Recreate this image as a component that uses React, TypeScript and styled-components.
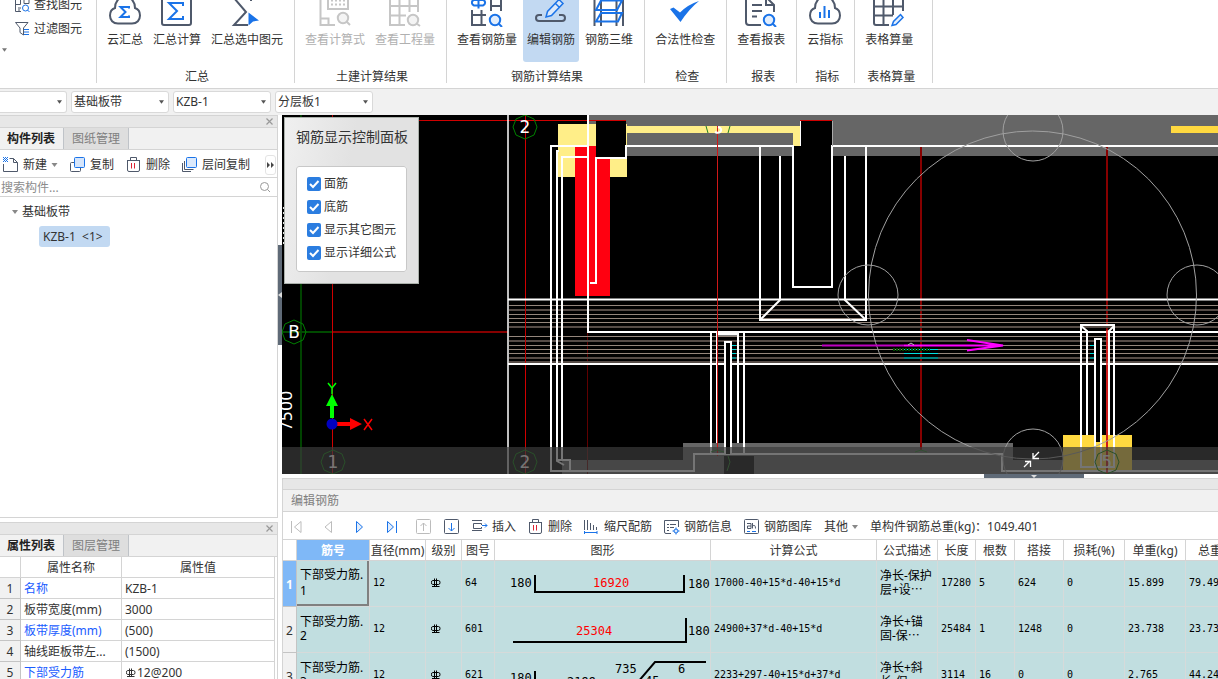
import React from "react";
import styled, { createGlobalStyle, css } from "styled-components";

const c = {
  text: "#333333",
  muted: "#808080",
  faint: "#b0b0b0",
  line: "#d4d4d4",
  chrome: "#f1f1f1",
  strip: "#e7e7e7",
  ink: "#4f596b",
  blue: "#1a73e8",
  link: "#1a5cff",
  select: "#c2d9f2",
  head: "#7fb8f7",
  row: "#c1dee0",
  rail: "#5f6a77",
};

const sans = `"Noto Sans", "Noto Sans CJK SC", sans-serif`;
const mono = `"DejaVu Sans Mono", "Noto Sans CJK SC", monospace`;

const GlobalStyle = createGlobalStyle`
  * { box-sizing: border-box; }
  body { margin: 0; background: #fff; color: ${c.text}; font: 12px/18px ${sans}; overflow: hidden; }
  button, input, select { font: inherit; color: inherit; margin: 0; }
  button { border: 0; padding: 0; background: none; white-space: nowrap; }
  svg { display: block; flex: none; }
`;

const Shell = styled.div`
  display: flex;
  flex-direction: column;
  height: 100vh;
`;

/* ---------- ribbon ---------- */

const Ribbon = styled.header`
  display: flex;
  flex: none;
  align-items: flex-end;
  height: 89px;
  padding-bottom: 5px;
  border-bottom: 1px solid ${c.line};
  overflow: hidden;
`;

const Group = styled.section`
  display: flex;
  flex: none;
  flex-direction: column;
  gap: 7px;
  min-width: 58px;
  height: 92px;
  padding: 0 7px 0 6px;
  border-right: 1px solid ${c.line};
  &:last-child { padding-right: 15px; }
`;

const GroupTools = styled.div`
  display: flex;
  gap: 2px;
`;

const GroupLabel = styled.div`
  padding-left: 4px;
  line-height: 16px;
  text-align: center;
  white-space: nowrap;
`;

const BigButton = styled.button<{ $active?: boolean }>`
  display: flex;
  flex-direction: column;
  align-items: center;
  gap: 4px;
  padding: 4px 4px 13px;
  border-radius: 3px;
  background: ${(p) => (p.$active ? c.select : "transparent")};
  &:disabled { color: ${c.faint}; }
`;

const MiniGroup = styled.section`
  display: flex;
  flex: none;
  flex-direction: column;
  width: 97px;
  height: 92px;
  padding-top: 2px;
  border-right: 1px solid ${c.line};
`;

const MiniButton = styled.button`
  display: flex;
  align-items: center;
  gap: 4px;
  height: 24px;
  padding-left: 14px;
`;

const MoreButton = styled.button`
  display: flex;
  align-items: center;
  height: 18px;
  padding-left: 2px;
`;

/* ---------- selector bar ---------- */

const SelectorBar = styled.div`
  display: flex;
  flex: none;
  gap: 4px;
  height: 26px;
  padding: 2px 0;
  background: ${c.chrome};
`;

const Picker = styled.label<{ $clipped?: boolean }>`
  display: grid;
  align-items: center;
  width: ${(p) => (p.$clipped ? 67 : 98)}px;
  border: 1px solid #d9d9d9;
  border-left-width: ${(p) => (p.$clipped ? 0 : 1)}px;
  border-radius: ${(p) => (p.$clipped ? "0 3px 3px 0" : "3px")};
  background: #fff;
  > * { grid-area: 1 / 1; }
  > svg { justify-self: end; margin-right: 4px; pointer-events: none; }
`;

const PickerSelect = styled.select`
  width: 100%;
  height: 20px;
  padding: 0 16px 0 2px;
  border: 0;
  background: transparent;
  appearance: none;
`;

/* ---------- work area ---------- */

const Work = styled.main`
  display: grid;
  flex: 1;
  grid-template-columns: 278px 4px minmax(0, 1fr);
  min-height: 0;
`;

const LeftDock = styled.aside`
  display: grid;
  grid-template-rows: minmax(0, 403fr) minmax(0, 157fr);
  gap: 4px;
  min-height: 0;
`;

const Panel = styled.section`
  display: flex;
  flex-direction: column;
  min-height: 0;
  border: 1px solid ${c.line};
  border-left: 0;
  background: #fff;
  overflow: hidden;
`;

const LowerPanel = styled(Panel)`
  border-bottom: 0;
`;

const PanelStrip = styled.div`
  display: flex;
  flex: none;
  align-items: center;
  justify-content: flex-end;
  height: 11px;
  padding-right: 3px;
  background: ${c.strip};
`;

const Tabs = styled.div`
  display: flex;
  flex: none;
  height: 23px;
  background: ${c.chrome};
  border-top: 1px solid ${c.line};
  border-bottom: 1px solid ${c.line};
`;

const Tab = styled.button<{ $on?: boolean }>`
  width: ${(p) => (p.$on ? 64 : 65)}px;
  padding-right: ${(p) => (p.$on ? 1 : 0)}px;
  border-right: 1px solid #bfc3c8;
  background: ${(p) => (p.$on ? c.chrome : "#dedede")};
  color: ${(p) => (p.$on ? "#222" : c.muted)};
  font-weight: ${(p) => (p.$on ? 700 : 400)};
`;

const PanelTools = styled.div`
  display: flex;
  flex: none;
  align-items: center;
  gap: 12px;
  height: 28px;
  padding: 2px 0 0 3px;
  border-bottom: 1px solid ${c.line};
`;

const ToolButton = styled.button`
  display: flex;
  align-items: center;
  gap: 4px;
`;

const Overflow = styled.button`
  display: grid;
  place-items: center;
  width: 11px;
  height: 20px;
  margin: 0 1px 0 auto;
  border: 1px solid #e4e4e4;
  border-radius: 3px;
`;

const Search = styled.label`
  display: flex;
  flex: none;
  align-items: center;
  height: 19px;
  padding-right: 6px;
  border-bottom: 1px solid ${c.line};
`;

const SearchInput = styled.input`
  flex: 1;
  min-width: 0;
  height: 18px;
  padding: 2px 1px 0;
  border: 0;
  outline: 0;
  &::placeholder { color: #8c8c8c; opacity: 1; }
`;

const Tree = styled.ul`
  margin: 0;
  padding: 3px 0 0 11px;
  list-style: none;
  ul { margin: 0; padding: 0 0 0 28px; list-style: none; }
`;

const TreeRow = styled.div`
  display: flex;
  align-items: center;
  gap: 3px;
  height: 24px;
`;

const TreeLeaf = styled.span`
  padding: 0 7px 0 4px;
  border-radius: 3px;
  background: ${c.select};
  line-height: 21px;
  white-space: pre;
`;

const PropTable = styled.table`
  width: 275px;
  border-spacing: 0;
  table-layout: fixed;
  th, td {
    height: 21px;
    padding: 2px 3px 0;
    border-right: 1px solid ${c.line};
    border-bottom: 1px solid ${c.line};
    font-weight: 400;
    text-align: left;
    white-space: nowrap;
    overflow: hidden;
  }
  thead th { text-align: center; }
  tbody th { padding: 2px 0 0; background: ${c.chrome}; text-align: center; border-color: #c4c4c4; }
  col:nth-child(1) { width: 21px; }
  col:nth-child(2) { width: 101px; }
`;

const PropName = styled.td<{ $link?: boolean }>`
  color: ${(p) => (p.$link ? c.link : c.text)};
`;

const BarValue = styled.span`
  display: flex;
  align-items: center;
  gap: 1px;
`;

const Splitter = styled.div`
  display: flex;
  align-items: flex-start;
  background: #fff;
  padding-top: 130px;
`;

const SplitterGrip = styled.button`
  display: grid;
  place-items: center;
  width: 4px;
  height: 100px;
  background: ${c.rail};
`;

const RightDock = styled.div`
  display: grid;
  grid-template-rows: minmax(0, 359fr) 4px minmax(0, 201fr);
  min-height: 0;
  min-width: 0;
`;

const Viewport = styled.div`
  position: relative;
  background: #000;
  overflow: hidden;
  > svg { width: 100%; height: 100%; }
`;

const FloatPanel = styled.form`
  position: absolute;
  top: 2px;
  left: 2px;
  width: 135px;
  padding: 9px 11px 11px;
  border: 1px solid #aab0aa;
  background: linear-gradient(100deg, #f0f0f0, #e2e2e2 45%);
  box-shadow: 0 0 8px rgba(0, 0, 0, 0.25);
`;

const FloatTitle = styled.h2`
  margin: 0 0 19px;
  font-size: 14px;
  line-height: 20px;
  font-weight: 400;
  white-space: nowrap;
`;

const FloatBox = styled.fieldset`
  display: flex;
  flex-direction: column;
  gap: 5px;
  width: 111px;
  height: 106px;
  margin: 0;
  padding: 8px 0 0 10px;
  border: 1px solid #c8c8c8;
  border-radius: 3px;
  background: #fff;
`;

const Check = styled.label`
  display: grid;
  grid-template-columns: 14px 1fr;
  align-items: center;
  column-gap: 3px;
  white-space: nowrap;
  svg { grid-area: 1 / 1; pointer-events: none; }
`;

const CheckInput = styled.input`
  grid-area: 1 / 1;
  appearance: none;
  width: 14px;
  height: 14px;
  border-radius: 2px;
  background: #2b7de0;
`;

const BottomSplitter = styled.div`
  background: #fff;
`;

const BottomGrip = styled.button`
  display: grid;
  place-items: center;
  width: 100px;
  height: 4px;
  margin-left: 75%;
  background: ${c.rail};
`;

const Editor = styled.section`
  display: flex;
  flex-direction: column;
  border: 1px solid ${c.line};
  border-width: 1px 0 0 1px;
  overflow: hidden;
`;

const EditorStrip = styled.div`
  flex: none;
  height: 11px;
  border-bottom: 1px solid ${c.line};
  background: ${c.strip};
`;

const EditorTitle = styled.h2`
  flex: none;
  height: 22px;
  margin: 0;
  padding-left: 8px;
  border-bottom: 1px solid ${c.line};
  background: ${c.chrome};
  color: ${c.muted};
  font-size: 12px;
  font-weight: 400;
  line-height: 21px;
`;

const EditorTools = styled.div`
  display: flex;
  flex: none;
  align-items: center;
  gap: 12px;
  height: 28px;
  padding: 2px 0 0 5px;
  border-bottom: 1px solid ${c.line};
`;

const NavTools = styled.div`
  display: flex;
  gap: 16px;
`;

const Total = styled.output`
  white-space: nowrap;
`;

const BarTable = styled.table`
  flex: none;
  align-self: flex-start;
  width: 973px;
  border-spacing: 0;
  table-layout: fixed;
`;

const HeadCell = styled.th<{ $on?: boolean }>`
  height: 21px;
  padding: 2px 0 0;
  border-right: 1px solid ${c.line};
  border-bottom: 1px solid ${c.line};
  background: ${(p) => (p.$on ? c.head : "#fff")};
  color: ${(p) => (p.$on ? "#fff" : c.text)};
  font-weight: ${(p) => (p.$on ? 700 : 400)};
  white-space: nowrap;
  overflow: hidden;
`;

const RowHead = styled.th<{ $on?: boolean }>`
  height: 46px;
  padding: 2px 0 0;
  border-right: 1px solid #c4c4c4;
  border-bottom: 1px solid #c4c4c4;
  background: ${(p) => (p.$on ? c.head : c.chrome)};
  color: ${(p) => (p.$on ? "#fff" : c.text)};
  font-weight: ${(p) => (p.$on ? 700 : 400)};
`;

const Cell = styled.td<{ $text?: boolean; $current?: boolean; $grade?: boolean }>`
  height: 46px;
  padding: 0 0 1px ${(p) => (p.$grade ? 4 : 3)}px;
  border-right: 1px solid #d6dada;
  border-bottom: 1px solid #d6dada;
  background: ${c.row};
  color: #000;
  font: ${(p) => (p.$text ? `12px/14px ${sans}` : `10px/14px ${mono}`)};
  white-space: nowrap;
  overflow: hidden;
  ${(p) =>
    p.$current &&
    css`
      box-shadow: inset -2px -2px 0 #808080;
      line-height: 16px;
    `}
`;

const ShapeCell = styled(Cell)`
  padding: 0;
`;

/* ---------- icons ---------- */

const Caret = ({ size = 5, color = "#555" }: { size?: number; color?: string }) => (
  <svg width={size} height="4" viewBox="0 0 6 4"><path d="M0 0H6L3 4Z" fill={color} /></svg>
);

const Ico32 = ({ children, color = c.ink }: { children: React.ReactNode; color?: string }) => (
  <svg width="32" height="32" viewBox="0 0 32 32" fill="none" stroke={color} strokeWidth="2">{children}</svg>
);

const Ico16 = ({ children, color = c.ink }: { children: React.ReactNode; color?: string }) => (
  <svg width="16" height="16" viewBox="0 0 16 16" fill="none" stroke={color} strokeWidth="1">{children}</svg>
);

const cloud =
  "M9 28.5C4 28.5 1 25 1 20.5C1 16.5 3 14 6 13C6 6.500 10 2 16 2C22 2 26 6.500 26 13C29 14 31 16.500 31 20.500C31 25 28 28.500 23 28.500Z";

const Lens = ({ color, fill }: { color: string; fill: string }) => (
  <>
    <circle cx="24" cy="25" r="5.200" fill={fill} stroke={color} />
    <path d="M27.500 28.500L31 32" stroke={color} />
  </>
);

const icons = {
  cloudSum: <Ico32><path d={cloud} /><path d="M20 13.500V12H11.500L16.500 17L11.500 22H20V20.500" stroke={c.blue} /></Ico32>,
  sum: <Ico32><rect x="1" y="1" width="29" height="29" rx="2" /><path d="M22 11V8H8L16 16L8 24H22V21" stroke={c.blue} /></Ico32>,
  sumPick: <Ico32><path d="M20 6V3H3L15 17L3 30H17" /><path d="M17.500 17.500L28 25.500L22 26.500L17.500 30.500Z" fill={c.blue} stroke="none" /></Ico32>,
  calcView: (
    <Ico32 color="#c6c6c6">
      <path d="M1.500 1V30H16M1.500 23.500H9.500V30" />
      <rect x="9" y="0" width="20" height="14" />
      <path d="M12 5.500H27M12 9.500H27" strokeDasharray="2 2" />
      <circle cx="24" cy="23" r="5.200" fill="#f4f4f4" /><path d="M27.500 26.500L31 30" />
    </Ico32>
  ),
  qtyView: (
    <Ico32 color="#c6c6c6">
      <path d="M1 2V30H16M10.500 2V30M20.500 2V17M29 2V17M1 11H30M1 20.500H17" />
      <circle cx="24" cy="25" r="5.200" fill="#f4f4f4" /><path d="M27.500 28.500L31 31" />
    </Ico32>
  ),
  barView: (
    <Ico32>
      <path d="M1 15V30H15M1 20H15M10.500 15V30M20 2V16M30 2V16M20 11H30" />
      <path d="M7.500 2V13.500M2.500 5H12.500A3 3 0 0 1 12 10.500H3A3 3 0 0 1 2.500 5" stroke={c.blue} />
      <Lens color={c.blue} fill="#e3eefc" />
    </Ico32>
  ),
  barEdit: (
    <Ico32>
      <path d="M7 20H4A3 3 0 0 0 4 26H27A3 3 0 0 0 27 20H24" />
      <path d="M11 22L12.500 16.500L24 4.500L28 8.500L16.500 20.500ZM20.500 8.500L24.500 12.500" stroke={c.blue} strokeWidth="1.500" fill="#dce9fa" />
    </Ico32>
  ),
  bar3d: (
    <Ico32>
      <path d="M1.500 1V31M8 1V31M23.500 1V31M30 1V31" />
      <path d="M8 5.500H29L24 15H3ZM8 18H29L25 26.500H3Z" stroke={c.blue} />
    </Ico32>
  ),
  check: <Ico32><path d="M1 14L4.500 12.500L11 17.500Q19 9.500 30 6Q20 14 11.500 27Z" fill={c.blue} stroke="none" /></Ico32>,
  report: (
    <Ico32>
      <path d="M16 30H4Q1 30 1 27V1H20L29 10V17M21 1V10H29M7 10H17M7 16H17M7 21.500H12" />
      <Lens color={c.blue} fill="#e3eefc" />
    </Ico32>
  ),
  cloudIndex: <Ico32><path d={cloud} /><path d="M11 17V23M15.500 11V23M20 15V23" stroke={c.blue} /></Ico32>,
  tableCalc: (
    <Ico32>
      <path d="M1 1V28Q1 30 3 30H16M10.500 1V30M20 1V20M30 1V16M1 11.500H30M1 20.500H20" />
      <path d="M19 30.500L20.500 26.500L27.500 19.500L30 22.500L23 29.500Z" stroke={c.blue} strokeWidth="1.500" fill="#e3eefc" />
    </Ico32>
  ),
  find: (
    <Ico16>
      <path d="M1.500 1V14.500H7M1.500 7.500H6.500V1M10 1V6.500H15V1M4 11H7M4 13H6" />
      <circle cx="11.500" cy="11" r="3" stroke={c.blue} /><path d="M13.500 13L15.500 15" stroke={c.blue} />
    </Ico16>
  ),
  filter: <Ico16><path d="M1.500 1.500H14L9.500 7V14L6 11.500V7Z" /><path d="M10 8.500H15M10 11H15M10 13.500H15" stroke={c.blue} /></Ico16>,
  create: (
    <Ico16>
      <path d="M6.500 1.500H10.500L14.500 5.500V14.500H.5V7M10.500 1.500V5.500H14.500" />
      <path d="M0 .5H5M0 2.500H5M0 4.500H5M1 1.500H5M1 3.500H5" stroke={c.blue} strokeDasharray="1 1" />
    </Ico16>
  ),
  copy: <Ico16><path d="M4.500 5.500H1.500Q.5 5.500 .5 6.500V13.500Q.5 14.500 1.500 14.500H9.500Q10.500 14.500 10.500 13.500V11" /><rect x="4.500" y=".5" width="10" height="10" rx="1" stroke={c.blue} fill="#d5e5fb" /></Ico16>,
  remove: <Ico16><path d="M1 3.500H14M4.500 3.500V.5H10.500V3.500M1.500 3.500V13Q1.500 14.500 3 14.500H12Q13.500 14.500 13.500 13V3.500" /><path d="M5.500 6V11.500M8.500 6V11.500" stroke="#d23" /></Ico16>,
  layerCopy: <Ico16><path d="M.5 6V14.500H9M2.500 4V12.500H11.500" /><rect x="4.500" y=".5" width="10" height="10" rx="1" stroke={c.blue} fill="#dceafc" /></Ico16>,
  first: <Ico16 color="#bcbcbc"><path d="M3.500 2V14M13 2.500V13.500L6.500 8Z" /></Ico16>,
  prev: <Ico16 color="#bcbcbc"><path d="M11.500 2.500V13.500L5 8Z" /></Ico16>,
  next: <Ico16 color={c.blue}><path d="M4.500 2.500V13.500L10.500 8Z" fill="#e3eefc" /></Ico16>,
  last: <Ico16 color={c.blue}><path d="M3.500 2.500V13.500L9.500 8Z" fill="#e3eefc" /><path d="M12.500 2V14" /></Ico16>,
  up: <Ico16 color="#bcbcbc"><rect x=".5" y=".5" width="14" height="14" rx="1" /><path d="M7.500 12V4M4.500 7L7.500 4L10.500 7" /></Ico16>,
  down: <Ico16><rect x=".5" y=".5" width="14" height="14" rx="1" /><path d="M7.500 4V12M4.500 9L7.500 12L10.500 9" stroke={c.blue} /></Ico16>,
  insert: <Ico16><path d="M0 1.500H10M0 11.500H10M9.500 6V4.500H1.500V9.500H9.500V8" /><path d="M10 6.500H15M13 4.500L15 6.500L13 8.500" stroke={c.blue} /></Ico16>,
  scale: <Ico16><path d="M.5 1V11M3.500 1V11M6.500 4V11M9.500 6V11M12.500 8V11" /><path d="M.5 12V15M13 12V15M.5 13.500H13" stroke={c.blue} /></Ico16>,
  info: <Ico16><path d="M7 14.500H2Q.5 14.500 .5 13V1.500H14.500V8M3 5.500H5M6 5.500H12M3 8.500H5M6 8.500H10M3 11.500H5" /><path d="M12 8.500V15.500M8.500 12H15.500" stroke={c.blue} /><circle cx="12" cy="12" r="2" fill="#dceafc" stroke={c.blue} /></Ico16>,
  library: <Ico16><rect x=".5" y=".5" width="14" height="14" rx="1" /><path d="M3 4.500H7V9.500H3.500V7H7M8.500 9.500V4M8.500 7Q11.500 5 11.500 9.500" /><path d="M3 12.500H6M8 12.500H12" stroke={c.blue} /></Ico16>,
};

const Grade = () => (
  <svg width="11" height="10" viewBox="-1 0 11 10" fill="none" stroke="currentColor">
    <path d="M3.500 0.500V8.500M5.500 0.500V8.500M1.500 2.500H7.500Q9 2.500 9 4.500Q9 6.500 7.500 6.500H1.500Q0.500 6.500 0.500 4.500Q0.500 2.500 1.500 2.500M1 8.500H8.500" />
  </svg>
);

const Close = () => (
  <svg width="9" height="9" viewBox="0 0 9 9" stroke="#999" strokeWidth="1.200"><path d="M1.500 1.500L7.500 7.500M7.500 1.500L1.500 7.500" /></svg>
);

/* ---------- model drawing ---------- */

const CadText = styled.text<{ $small?: boolean }>`
  font-family: "DejaVu Sans", sans-serif;
  font-size: ${(p) => (p.$small ? 16 : 17)}px;
  text-anchor: middle;
`;

const Bubble = ({ x, y, label }: { x: number; y: number; label?: string }) => (
  <g>
    <path
      d={`M${x - 12} ${y}L${x - 9} ${y - 8}L${x} ${y - 12}L${x + 9} ${y - 8}L${x + 12} ${y}L${x + 9} ${y + 8}L${x} ${y + 12}L${x - 9} ${y + 8}Z`}
      fill="none" stroke="#008000"
    />
    {label && <CadText x={x} y={y + 6} fill="#fff">{label}</CadText>}
  </g>
);

const brightBars = [305, 314, 318, 322, 336, 345, 349, 353];
const dimBars = [309, 326, 340, 357, 361];

const Model = () => (
  <svg viewBox="282 115 936 359" preserveAspectRatio="xMinYMin slice" fill="none" role="img" aria-label="板带钢筋平面图">
    <path d="M589 115H1218V156H589ZM562 460H683V443H1013V460H1218V474H562Z" fill="#666" />
    <path d="M558 124H627V177H558ZM626 126H800V133H626ZM793 126H800V146H793Z" fill="#ffee88" />
    <path d="M1171 126H1218V133H1171ZM1063 435H1132V470H1063Z" fill="#ffd940" />
    <path d="M575 146H610V296H575Z" fill="#ff0010" />
    <path d="M596 120H626V158H596ZM800 120H832V146H800ZM793 146H832V287H793ZM724 456H754V474H724Z" fill="#000" />

    <path d="M332.500 115V474M525.500 115V474M419 120.500H596M596 120.500H626M800 120.500H832M717.500 126V456" stroke="#d00000" />
    <path d="M333 332H508M921 146V450M1107 146V474" stroke="#860000" strokeWidth="2" />
    <path d="M587.500 332V474" stroke="#600000" />
    <path d="M301 115V474" stroke="#005a00" strokeWidth="1.500" />
    <path d="M282 332H332" stroke="#004a00" strokeWidth="2" />

    <path d={brightBars.map((y) => `M509 ${y}.5H1218`).join("")} stroke="#94867c" />
    <path d={dimBars.map((y) => `M509 ${y + 1}H1218`).join("")} stroke="#554b46" strokeWidth="2" />
    <path d="M525.500 300V364" stroke="#c00000" />

    <g stroke="#fff" strokeWidth="2">
      <path d="M508 115V474" strokeWidth="1.500" />
      <path d="M587 146H551V471H694V454H1002V471H1218" />
      <path d="M559 151H557V461L564 465M587 157H562V461M558 460H570V471" />
      <path d="M588 115V332H1218" />
      <path d="M590 283H596V158H626V146H793V287H832V146H1218" />
      <path d="M508 299.500H1218M508 364H1218" />
      <path d="M800.500 121V146" strokeWidth="1" />
      <path d="M760 147V320H866V147M780 156V300L761 319M845 156V300L865 319" />
      <path d="M711 332V453M717 332V443M738 332V443M744 332V453" />
      <path d="M717 334H739" strokeWidth="3" />
      <path d="M1081 467V325H1114V467ZM1087 435V331L1081 326M1109 435V331L1114 326M1087 332H1109" />
    </g>
    <path d="M725 454V342H731V454" fill="#000" stroke="#fff" strokeWidth="2" />
    <path d="M1095 442V339H1101V442" fill="#000" stroke="#fff" strokeWidth="2" />
    <path d="M1095 442V467M1101 442V467" stroke="#fff" strokeWidth="2" />
    <path d="M832.500 121V146" stroke="#aaa" />
    <path d="M717.500 126V450" stroke="#d01818" />
    <path d="M1107 330V474" stroke="#e02020" strokeWidth="2" opacity=".8" />

    <g stroke="#a0a0a0">
      <circle cx="1032.500" cy="295" r="164" />
      <circle cx="868" cy="295" r="30" />
      <circle cx="1033" cy="131" r="30" />
      <circle cx="1197" cy="295" r="30" />
      <circle cx="1033" cy="459" r="30" />
    </g>

    <path d="M732 345.500H736M732 349.500H736M732 353.500H736M904 349.500H938M904 353.500H938M1090 345.500H1094M1090 353.500H1094" stroke="#00e0e0" />
    <path d="M904 358H938M732 358H736M1090 358H1094" stroke="#008080" strokeWidth="2" />
    <path d="M893 349.500H930" stroke="#004800" strokeWidth="3" strokeDasharray="2 1" />
    <path d="M822 345.500H904" stroke="#c000c0" strokeWidth="2" />
    <path d="M904 345.500H1000M967 340L1003 345.500L967 350.500" stroke="#ff00ff" strokeWidth="2" />
    <path d="M908 345L911 343L914 345" stroke="#bbb" />

    <Bubble x={525} y={127} label="2" />
    <Bubble x={294} y={332} label="B" />
    <Bubble x={333} y={462} label="1" />
    <Bubble x={525} y={462} label="2" />
    <Bubble x={1107} y={462} label="5" />
    <path d="M706 126L708 133M730 126L728 133M711 452L717 450L724 452M728 456L730 462L727 471M915 452L921 450L927 452" stroke="#208020" />
    <path d="M718 127Q722 128 721 131Q719 134 715 132" stroke="#fff" strokeWidth="2" />
    <CadText $small transform="translate(292 411) rotate(-90)" fill="#fff">7500</CadText>
    <path d="M283.500 207V246" stroke="#fff" strokeDasharray="2 3" />

    <path d="M330 418V406H326L332 394L338 406H334V418Z" fill="#00ff00" />
    <path d="M337 422H350V418L362 424L350 430V426H337Z" fill="#ff0000" />
    <circle cx="332" cy="424" r="5.500" fill="#0000c0" />
    <path d="M328 383L332 388L336 383M332 388V394" stroke="#00ff00" strokeWidth="1.500" />
    <path d="M364 419L372 430M372 419L364 430" stroke="#ff0000" strokeWidth="1.500" />

    <path d="M282 447H1218V474H282Z" fill="#3a3a3a" opacity=".7" />
    <path d="M1039 452L1033 458M1033 453V458.500H1039M1024 467L1030 461M1025 461.500H1030.500V467" stroke="#fff" strokeWidth="1.300" />
  </svg>
);

/* ---------- bar shapes ---------- */

const ShapeText = styled.text`
  font-family: "DejaVu Sans Mono", monospace;
  font-size: 12px;
`;

const ShapeSvg = ({ children }: { children: React.ReactNode }) => (
  <svg width="215" height="45" viewBox="0 0 215 45" fill="none">{children}</svg>
);

const shapes = [
  <ShapeSvg key="a">
    <path d="M40 14V31H189V14" stroke="#000" strokeWidth="2" />
    <ShapeText x="15" y="26" fill="#000">180</ShapeText>
    <ShapeText x="98" y="26" fill="#f00">16920</ShapeText>
    <ShapeText x="193" y="27" fill="#000">180</ShapeText>
  </ShapeSvg>,
  <ShapeSvg key="b">
    <path d="M18 35H191V11" stroke="#000" strokeWidth="2" />
    <ShapeText x="81" y="28" fill="#f00">25304</ShapeText>
    <ShapeText x="193" y="28" fill="#000">180</ShapeText>
  </ShapeSvg>,
  <ShapeSvg key="c">
    <path d="M40 18V36H137L160 9H211" stroke="#000" strokeWidth="2" />
    <ShapeText x="15" y="29" fill="#000">180</ShapeText>
    <ShapeText x="120" y="20" fill="#000">735</ShapeText>
    <ShapeText x="183" y="20" fill="#000">6</ShapeText>
    <ShapeText x="72" y="33" fill="#000">2199</ShapeText>
    <ShapeText x="150" y="32" fill="#000">45</ShapeText>
  </ShapeSvg>,
];

/* ---------- data ---------- */

const ribbon = [
  { name: "汇总", items: [["云汇总", "cloudSum"], ["汇总计算", "sum"], ["汇总选中图元", "sumPick"]] },
  { name: "土建计算结果", disabled: true, items: [["查看计算式", "calcView"], ["查看工程量", "qtyView"]] },
  { name: "钢筋计算结果", items: [["查看钢筋量", "barView"], ["编辑钢筋", "barEdit"], ["钢筋三维", "bar3d"]] },
  { name: "检查", items: [["合法性检查", "check"]] },
  { name: "报表", items: [["查看报表", "report"]] },
  { name: "指标", items: [["云指标", "cloudIndex"]] },
  { name: "表格算量", items: [["表格算量", "tableCalc"]] },
];

const props: [string, React.ReactNode, boolean][] = [
  ["名称", "KZB-1", true],
  ["板带宽度(mm)", "3000", false],
  ["板带厚度(mm)", "(500)", true],
  ["轴线距板带左...", "(1500)", false],
  ["下部受力筋", <BarValue key="v"><Grade />12@200</BarValue>, true],
];

const columns: [string, number][] = [
  ["", 14], ["筋号", 73], ["直径(mm)", 56], ["级别", 36], ["图号", 33], ["图形", 216], ["计算公式", 166],
  ["公式描述", 61], ["长度", 38], ["根数", 39], ["搭接", 49], ["损耗(%)", 61], ["单重(kg)", 61], ["总重(kg)", 70],
];

const bars = [
  { no: "64", formula: "17000-40+15*d-40+15*d", desc: ["净长-保护", "层+设⋯"], rest: ["17280", "5", "624", "0", "15.899", "79.495"] },
  { no: "601", formula: "24900+37*d-40+15*d", desc: ["净长+锚", "固-保⋯"], rest: ["25484", "1", "1248", "0", "23.738", "23.738"] },
  { no: "621", formula: "2233+297-40+15*d+37*d", desc: ["净长+斜", "长-保⋯"], rest: ["3114", "16", "0", "0", "2.765", "44.24"] },
];

const Tool = ({ icon, label }: { icon: keyof typeof icons; label: string }) => (
  <ToolButton type="button">{icons[icon]}{label}</ToolButton>
);

const PickerBox = ({ label, value, clipped }: { label: string; value: string; clipped?: boolean }) => (
  <Picker $clipped={clipped}>
    <PickerSelect aria-label={label}><option>{value}</option></PickerSelect>
    <Caret />
  </Picker>
);

export default function App() {
  return (
    <Shell>
      <GlobalStyle />
      <Ribbon>
        <MiniGroup>
          <MiniButton>{icons.find}查找图元</MiniButton>
          <MiniButton>{icons.filter}过滤图元</MiniButton>
          <MoreButton aria-label="更多"><Caret color="#777" /></MoreButton>
        </MiniGroup>
        {ribbon.map((g) => (
          <Group key={g.name}>
            <GroupTools>
              {g.items.map(([label, icon]) => (
                <BigButton key={label} disabled={g.disabled} $active={icon === "barEdit"}>
                  {icons[icon as keyof typeof icons]}
                  {label}
                </BigButton>
              ))}
            </GroupTools>
            <GroupLabel>{g.name}</GroupLabel>
          </Group>
        ))}
      </Ribbon>

      <SelectorBar>
        <PickerBox label="楼层" value="" clipped />
        <PickerBox label="构件类型" value="基础板带" />
        <PickerBox label="构件" value="KZB-1" />
        <PickerBox label="分层" value="分层板1" />
      </SelectorBar>

      <Work>
        <LeftDock>
          <Panel>
            <PanelStrip><button aria-label="关闭构件列表"><Close /></button></PanelStrip>
            <Tabs><Tab $on>构件列表</Tab><Tab>图纸管理</Tab></Tabs>
            <PanelTools>
              <ToolButton>{icons.create}新建<Caret size={7} color="#888" /></ToolButton>
              <Tool icon="copy" label="复制" />
              <Tool icon="remove" label="删除" />
              <Tool icon="layerCopy" label="层间复制" />
              <Overflow aria-label="更多工具">
                <svg width="7" height="6" viewBox="0 0 7 6" fill="#444"><path d="M0 0L3 3L0 6ZM4 0L7 3L4 6Z" /></svg>
              </Overflow>
            </PanelTools>
            <Search>
              <SearchInput placeholder="搜索构件..." aria-label="搜索构件" />
              <svg width="12" height="12" viewBox="0 0 12 12" fill="none" stroke="#999"><circle cx="5.500" cy="5.500" r="4" /><path d="M8.500 8.500L11 11" /></svg>
            </Search>
            <Tree>
              <li>
                <TreeRow><Caret size={8} color="#888" />基础板带</TreeRow>
                <ul><li><TreeRow><TreeLeaf>{"KZB-1  <1>"}</TreeLeaf></TreeRow></li></ul>
              </li>
            </Tree>
          </Panel>
          <LowerPanel>
            <PanelStrip><button aria-label="关闭属性列表"><Close /></button></PanelStrip>
            <Tabs><Tab $on>属性列表</Tab><Tab>图层管理</Tab></Tabs>
            <PropTable>
              <colgroup><col /><col /><col /></colgroup>
              <thead><tr><th /><th>属性名称</th><th>属性值</th></tr></thead>
              <tbody>
                {props.map(([name, value, link], i) => (
                  <tr key={name}><th>{i + 1}</th><PropName $link={link}>{name}</PropName><td>{value}</td></tr>
                ))}
              </tbody>
            </PropTable>
          </LowerPanel>
        </LeftDock>

        <Splitter>
          <SplitterGrip aria-label="收起左侧面板"><svg width="4" height="6" viewBox="0 0 4 6"><path d="M4 0V6L0 3Z" fill="#ddd" /></svg></SplitterGrip>
        </Splitter>

        <RightDock>
          <Viewport>
            <Model />
            <FloatPanel>
              <FloatTitle>钢筋显示控制面板</FloatTitle>
              <FloatBox>
                {["面筋", "底筋", "显示其它图元", "显示详细公式"].map((t) => (
                  <Check key={t}>
                    <CheckInput type="checkbox" defaultChecked />
                    <svg width="14" height="14" viewBox="0 0 14 14" fill="none" stroke="#fff" strokeWidth="2"><path d="M3 7L6 10L11.500 4" /></svg>
                    {t}
                  </Check>
                ))}
              </FloatBox>
            </FloatPanel>
          </Viewport>

          <BottomSplitter>
            <BottomGrip aria-label="收起编辑面板"><svg width="6" height="3" viewBox="0 0 6 3"><path d="M0 0H6L3 3Z" fill="#ddd" /></svg></BottomGrip>
          </BottomSplitter>

          <Editor>
            <EditorStrip />
            <EditorTitle>编辑钢筋</EditorTitle>
            <EditorTools>
              <NavTools>
                <button aria-label="首个" disabled>{icons.first}</button>
                <button aria-label="上一个" disabled>{icons.prev}</button>
                <button aria-label="下一个">{icons.next}</button>
                <button aria-label="末个">{icons.last}</button>
                <button aria-label="上移" disabled>{icons.up}</button>
              </NavTools>
              <button aria-label="下移">{icons.down}</button>
              <Tool icon="insert" label="插入" />
              <Tool icon="remove" label="删除" />
              <Tool icon="scale" label="缩尺配筋" />
              <Tool icon="info" label="钢筋信息" />
              <Tool icon="library" label="钢筋图库" />
              <ToolButton>其他<Caret size={6} color="#888" /></ToolButton>
              <Total>单构件钢筋总重(kg)：1049.401</Total>
            </EditorTools>
            <BarTable>
              <colgroup>{columns.map(([n, w]) => <col key={n} width={w} />)}</colgroup>
              <thead><tr>{columns.map(([n]) => <HeadCell key={n} $on={n === "筋号"}>{n}</HeadCell>)}</tr></thead>
              <tbody>
                {bars.map((b, i) => (
                  <tr key={b.no}>
                    <RowHead $on={i === 0}>{i + 1}</RowHead>
                    <Cell $text $current={i === 0}>下部受力筋.<br />{i + 1}</Cell>
                    <Cell>12</Cell>
                    <Cell $grade><BarValue><Grade /></BarValue></Cell>
                    <Cell>{b.no}</Cell>
                    <ShapeCell>{shapes[i]}</ShapeCell>
                    <Cell>{b.formula}</Cell>
                    <Cell $text>{b.desc[0]}<br />{b.desc[1]}</Cell>
                    {b.rest.map((v, k) => <Cell key={k}>{v}</Cell>)}
                  </tr>
                ))}
              </tbody>
            </BarTable>
          </Editor>
        </RightDock>
      </Work>
    </Shell>
  );
}
